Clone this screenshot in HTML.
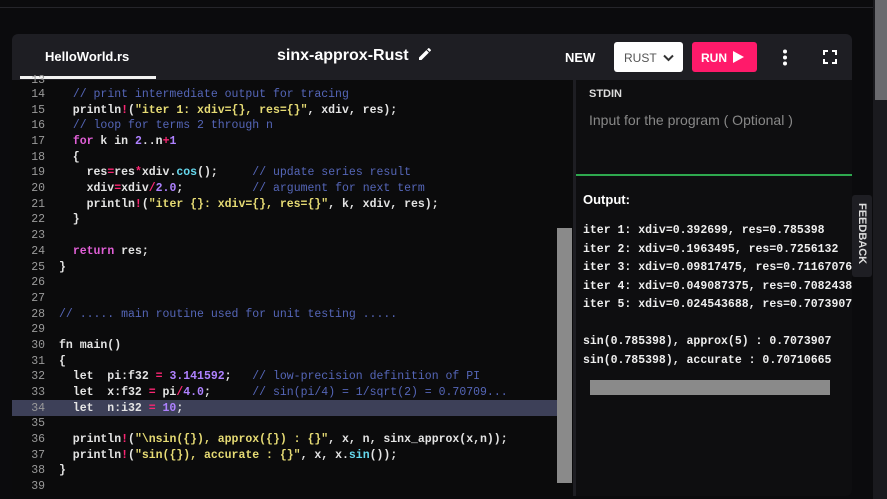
<!DOCTYPE html>
<html><head><style>
*{margin:0;padding:0;box-sizing:border-box}
body{width:887px;height:499px;background:#0b0b0d;overflow:hidden;position:relative;font-family:"Liberation Sans",sans-serif}
.topline{position:absolute;left:0;top:7px;width:873px;height:1px;background:#25252a}
.rstrip{position:absolute;left:873px;top:0;width:14px;height:499px;background:#1a1a1e}
.rthumb{position:absolute;left:875px;top:0;width:12px;height:100px;background:#6a6a6e}
.card{position:absolute;left:12px;top:34px;width:840px;height:462px;background:#0b0b0c;border-radius:6px;overflow:hidden}
.hdr{position:absolute;left:0;top:0;width:840px;height:46px;background:#1e1e23}
.tab{position:absolute;left:33px;top:15px;color:#fff;font-size:13px;font-weight:bold}
.tabline{position:absolute;left:8px;top:42px;width:136px;height:3px;background:#f2f2f2}
.title{position:absolute;left:265px;top:12px;color:#fff;font-size:16px;font-weight:bold}
.new{position:absolute;left:553px;top:16px;color:#fff;font-size:13px;font-weight:bold}
.rust{position:absolute;left:602px;top:8px;width:69px;height:30px;background:#fff;border-radius:3px;color:#555;font-size:12px;padding:9px 0 0 10px}
.run{position:absolute;left:680px;top:8px;width:65px;height:30px;background:#ff1a6a;border-radius:3px;color:#fff;font-size:12px;font-weight:bold;padding:9px 0 0 9px}
.code{position:absolute;left:0;top:46px;width:560px;height:416px;font-family:"Liberation Mono",monospace;font-size:11.5px;font-weight:bold;color:#e4e4e4}
.ln{position:absolute;left:0;width:33px;text-align:right;color:#9a9a9a;font-weight:normal}
.l{position:absolute;left:47px;white-space:pre;height:15.68px}
.hl{position:absolute;left:0;top:320px;width:545px;height:16px;background:#3d4058}
.vs{position:absolute;left:545px;top:148px;width:15px;height:255px;background:#8a8a8a}
.c{color:#5566b8;font-weight:normal}.s{color:#e6db74}.k{color:#e05fd6}.n{color:#ae81ff}.f{color:#66d9ef}.o{color:#f92672}
.right{position:absolute;left:561px;top:46px;width:279px;height:416px;background:#0e0e10;border-left:3px solid #1e1e23}
.stdin{position:absolute;left:13px;top:8px;color:#ddd;font-size:11px;font-weight:bold}
.ph{position:absolute;left:13px;top:32px;color:#888;font-size:14px}
.green{position:absolute;left:0;top:94px;width:279px;height:2px;background:#2ea84e}
.outl{position:absolute;left:7px;top:112px;color:#fff;font-size:13px;font-weight:bold}
.out{position:absolute;left:7px;top:142px;font-family:"Liberation Mono",monospace;font-size:11.5px;font-weight:bold;color:#eee;white-space:pre;line-height:18.5px}
.hs{position:absolute;left:14px;top:300px;width:240px;height:15px;background:#8a8a8a}
.fb{position:absolute;left:852px;top:195px;width:20px;height:82px;background:#1e1e23;border-radius:3px}
.fbt{position:absolute;left:856px;top:203px;color:#ddd;font-size:11px;font-weight:bold;writing-mode:vertical-rl}
</style></head><body>
<div class="topline"></div>
<div class="rstrip"></div><div class="rthumb"></div>
<div class="card">
<div class="hdr">
<div class="tab">HelloWorld.rs</div><div class="tabline"></div>
<div class="title">sinx-approx-Rust <svg width="16" height="16" viewBox="0 0 24 24" style="vertical-align:-2px;margin-left:4px"><path fill="#fff" d="M3 17.25V21h3.75L17.8 9.94l-3.75-3.75L3 17.25zM20.7 7.04a1 1 0 000-1.41l-2.34-2.34a1 1 0 00-1.41 0l-1.830 1.83 3.75 3.75 1.83-1.83z"/></svg></div>
<div class="new">NEW</div>
<div class="rust">RUST <svg width="11" height="8" viewBox="0 0 11 8" style="margin-left:3px"><path d="M1 1.5l4.5 4.5 4.5-4.5" stroke="#333" stroke-width="2" fill="none"/></svg></div>
<div class="run">RUN <svg width="11" height="12" viewBox="0 0 11 12" style="margin-left:3px;vertical-align:-1px"><path d="M0 0l11 6-11 6z" fill="#fff"/></svg></div>
<svg style="position:absolute;left:770px;top:15px" width="6" height="17"><circle cx="3" cy="2.5" r="2" fill="#fff"/><circle cx="3" cy="8.5" r="2" fill="#fff"/><circle cx="3" cy="14.5" r="2" fill="#fff"/></svg>
<svg style="position:absolute;left:811px;top:16px" width="14" height="14" viewBox="0 0 14 14" fill="none" stroke="#fff" stroke-width="2"><path d="M1 5V1h4M9 1h4v4M13 9v4H9M5 13H1V9"/></svg>
</div>
<div class="code">
<div class="hl"></div>
<div class="vs"></div>
<div class="ln" style="top:-6px">13</div><div class="ln" style="top:8px">14</div><div class="ln" style="top:23.7px">15</div><div class="ln" style="top:39.4px">16</div><div class="ln" style="top:55px">17</div><div class="ln" style="top:70.7px">18</div><div class="ln" style="top:86.4px">19</div><div class="ln" style="top:102px">20</div><div class="ln" style="top:117.8px">21</div><div class="ln" style="top:133.4px">22</div><div class="ln" style="top:149px">23</div><div class="ln" style="top:164.8px">24</div><div class="ln" style="top:180.5px">25</div><div class="ln" style="top:196px">26</div><div class="ln" style="top:211.8px">27</div><div class="ln" style="top:227.5px">28</div><div class="ln" style="top:243px">29</div><div class="ln" style="top:258.8px">30</div><div class="ln" style="top:274.5px">31</div><div class="ln" style="top:290px">32</div><div class="ln" style="top:305.8px">33</div><div class="ln" style="top:321.5px">34</div><div class="ln" style="top:337px">35</div><div class="ln" style="top:352.8px">36</div><div class="ln" style="top:368.5px">37</div><div class="ln" style="top:384px">38</div><div class="ln" style="top:399.8px">39</div>
<div class="l" style="top:8px">  <span class="c">// print intermediate output for tracing</span></div>
<div class="l" style="top:23.7px">  println<span class="o">!</span>(<span class="s">"iter 1: xdiv={}, res={}"</span>, xdiv, res);</div>
<div class="l" style="top:39.4px">  <span class="c">// loop for terms 2 through n</span></div>
<div class="l" style="top:55px">  <span class="k">for</span> k in <span class="n">2</span>..n<span class="o">+</span><span class="n">1</span></div>
<div class="l" style="top:70.7px">  {</div>
<div class="l" style="top:86.4px">    res<span class="o">=</span>res<span class="o">*</span>xdiv.<span class="f">cos</span>();     <span class="c">// update series result</span></div>
<div class="l" style="top:102px">    xdiv<span class="o">=</span>xdiv<span class="o">/</span><span class="n">2.0</span>;          <span class="c">// argument for next term</span></div>
<div class="l" style="top:117.8px">    println<span class="o">!</span>(<span class="s">"iter {}: xdiv={}, res={}"</span>, k, xdiv, res);</div>
<div class="l" style="top:133.4px">  }</div>
<div class="l" style="top:164.8px">  <span class="k">return</span> res;</div>
<div class="l" style="top:180.5px">}</div>
<div class="l" style="top:227.5px"><span class="c">// ..... main routine used for unit testing .....</span></div>
<div class="l" style="top:258.8px">fn main()</div>
<div class="l" style="top:274.5px">{</div>
<div class="l" style="top:290px">  let  pi:f32 <span class="o">=</span> <span class="n">3.141592</span>;   <span class="c">// low-precision definition of PI</span></div>
<div class="l" style="top:305.8px">  let  x:f32 <span class="o">=</span> pi<span class="o">/</span><span class="n">4.0</span>;      <span class="c">// sin(pi/4) = 1/sqrt(2) = 0.70709...</span></div>
<div class="l" style="top:321.5px">  let  n:i32 <span class="o">=</span> <span class="n">10</span>;</div>
<div class="l" style="top:352.8px">  println<span class="o">!</span>(<span class="s">"\nsin({}), approx({}) : {}"</span>, x, n, sinx_approx(x,n));</div>
<div class="l" style="top:368.5px">  println<span class="o">!</span>(<span class="s">"sin({}), accurate : {}"</span>, x, x.<span class="f">sin</span>());</div>
<div class="l" style="top:384px">}</div>
</div>
<div class="right">
<div class="stdin">STDIN</div>
<div class="ph">Input for the program ( Optional )</div>
<div class="green"></div>
<div class="outl">Output:</div>
<div class="out">iter 1: xdiv=0.392699, res=0.785398
iter 2: xdiv=0.1963495, res=0.7256132
iter 3: xdiv=0.09817475, res=0.71167076
iter 4: xdiv=0.049087375, res=0.7082438
iter 5: xdiv=0.024543688, res=0.7073907

sin(0.785398), approx(5) : 0.7073907
sin(0.785398), accurate : 0.70710665</div>
<div class="hs"></div>
</div>
</div>
<div class="fb"></div><div class="fbt">FEEDBACK</div>
</body></html>
